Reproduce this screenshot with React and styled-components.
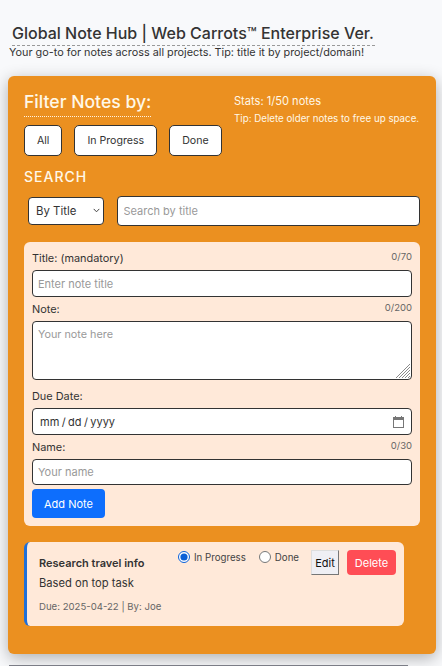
import React from "react";
import styled, { createGlobalStyle } from "styled-components";

const Global = createGlobalStyle`
  html, body {
    margin: 0;
    height: 666px;
    overflow: hidden;
    background: #f8f9fb;
    font-family: Inter, "Liberation Sans", sans-serif;
    color: #333;
  }
  * { box-sizing: border-box; }
`;

const Page = styled.div`
  padding: 24px 6px 0 8px;
`;

const Header = styled.header`
  height: 52px;
`;

const Title = styled.h1`
  display: inline-block;
  margin: 0 0 0 4px;
  padding: 0 1px 3px 0;
  font-size: 16px;
  line-height: 18px;
  font-weight: 500;
  color: #333;
  border-bottom: 1px dashed #999;
  vertical-align: top;
`;

const Subtitle = styled.p`
  margin: 0 0 0 1px;
  font-size: 10.85px;
  line-height: 13px;
  color: #333;
`;

const Panel = styled.main`
  width: 428px;
  height: 578px;
  padding: 16px;
  background: #eb9020;
  border-radius: 6px;
  box-shadow: 0 4px 16px rgba(0, 0, 0, 0.3);
`;

const FilterRow = styled.div`
  display: flex;
  justify-content: space-between;
`;

const FilterHeading = styled.h2`
  display: inline-block;
  margin: -1px 0 8px;
  padding-bottom: 3px;
  font-size: 17.6px;
  line-height: 22px;
  font-weight: 500;
  color: #fff8e8;
  border-bottom: 1px dotted #fff3e0;
`;

const Buttons = styled.div`
  display: flex;
  gap: 12px;
`;

const FilterButton = styled.button`
  height: 31px;
  padding: 0 12px;
  background: #fff;
  border: 1px solid #333;
  border-radius: 5px;
  font: 10.6px Inter, sans-serif;
  color: #333;
`;

const Stats = styled.div`
  width: 186px;
  color: #fff8e8;
`;

const StatLine = styled.div`
  font-size: ${(p) => p.$size}px;
  line-height: 18px;
  white-space: nowrap;
`;

const SearchHeading = styled.h3`
  margin: 12px 0 11px;
  font-size: 14px;
  line-height: 17px;
  font-weight: 500;
  letter-spacing: 1px;
  color: #fff8e8;
`;

const SearchRow = styled.div`
  display: flex;
  align-items: center;
  gap: 12.5px;
  padding-left: 4px;
`;

const SelectWrap = styled.div`
  position: relative;
  width: 76px;
  height: 28px;
`;

const SearchSelect = styled.select`
  display: block;
  width: 100%;
  height: 100%;
  padding: 0 7px;
  appearance: none;
  background: #fff;
  border: 1px solid #333;
  border-radius: 4px;
  font: 11.4px Inter, sans-serif;
  color: #333;
`;

const Chevron = styled.svg`
  position: absolute;
  top: 11px;
  right: 4px;
  width: 7px;
  height: 5px;
  pointer-events: none;
`;

const TextInput = styled.input`
  display: block;
  flex: 1;
  width: 100%;
  height: ${(p) => p.$height || 27}px;
  padding: 0 ${(p) => p.$pad || 5}px;
  background: #fff;
  border: 1px solid #333;
  border-radius: 4px;
  font: 11px Inter, sans-serif;
  color: #333;
  &::placeholder { color: #999; opacity: 1; }
`;

const NoteForm = styled.form`
  height: 284px;
  margin-top: 16px;
  padding: 8px;
  background: #ffe9d9;
  border-radius: 6px;
`;

const LabelRow = styled.div`
  display: flex;
  justify-content: space-between;
  height: ${(p) => p.$height}px;
  padding-top: ${(p) => p.$top}px;
`;

const Label = styled.label`
  font-size: 10.9px;
  line-height: 15px;
  color: #333;
`;

const Counter = styled.span`
  font-size: 9.5px;
  line-height: 12px;
  color: #666;
`;

const AreaWrap = styled.div`
  position: relative;
  height: 59px;
`;

const NoteArea = styled.textarea`
  display: block;
  width: 100%;
  height: 100%;
  padding: 6px 5px;
  resize: none;
  background: #fff;
  border: 1px solid #333;
  border-radius: 4px;
  font: 10.8px Inter, sans-serif;
  &::placeholder { color: #999; opacity: 1; }
`;

const Grip = styled.svg`
  position: absolute;
  right: 2px;
  bottom: 2px;
  width: 14px;
  height: 14px;
  pointer-events: none;
`;

const DateWrap = styled.div`
  position: relative;
  height: 27px;
`;

const DateInput = styled.input`
  display: block;
  width: 100%;
  height: 100%;
  padding: 0 6px;
  background: #fff;
  border: 1px solid #333;
  border-radius: 4px;
  font: 11px Inter, sans-serif;
  color: #333;
  &::-webkit-datetime-edit-text { padding: 0 1.4px; }
  &::-webkit-calendar-picker-indicator { opacity: 0; }
`;

const CalendarIcon = styled.svg`
  position: absolute;
  top: 8px;
  right: 8px;
  width: 11px;
  height: 12px;
  pointer-events: none;
`;

const AddButton = styled.button`
  display: block;
  height: 29px;
  margin-top: 4px;
  padding: 0 12px;
  background: #0d6efd;
  border: none;
  border-radius: 4px;
  font: 11px Inter, sans-serif;
  color: #fff;
`;

const NoteCard = styled.article`
  display: flex;
  justify-content: space-between;
  width: 380px;
  height: 84px;
  margin-top: 16px;
  padding: 8px 8px 0 12px;
  background: #ffe9d9;
  border-left: 3px solid #1e6fd9;
  border-radius: 6px;
`;

const NoteText = styled.div`
  padding-top: 6px;
`;

const NoteTitle = styled.div`
  font-size: 11px;
  line-height: 14px;
  font-weight: 600;
  color: #333;
`;

const NoteBody = styled.div`
  margin-top: 6px;
  font-size: 11.2px;
  line-height: 14px;
  color: #333;
`;

const NoteMeta = styled.div`
  margin-top: 11px;
  font-size: 9.6px;
  line-height: 12px;
  color: #666;
`;

const NoteActions = styled.div`
  display: flex;
  align-items: flex-start;
`;

const RadioLabel = styled.label`
  display: flex;
  align-items: center;
  gap: 4px;
  height: 12px;
  margin: 1px 13px 0 0;
  font-size: 9.7px;
  color: #444;
`;

const Radio = styled.input`
  width: 12px;
  height: 12px;
  margin: 0;
  accent-color: #0b5fd6;
`;

const EditButton = styled.button`
  width: 28px;
  height: 25px;
  margin: 0 8px 0 -1px;
  padding: 0;
  background: #efeff4;
  border: 1px solid #767676;
  border-color: #ddd #767676 #767676 #ddd;
  font: 11px Inter, sans-serif;
  color: #111;
`;

const DeleteButton = styled.button`
  width: 49px;
  height: 25px;
  padding: 0;
  background: #ff4d55;
  border: none;
  border-radius: 4px;
  font: 11px Inter, sans-serif;
  color: #fff;
`;

const NextStrip = styled.div`
  width: 399px;
  height: 1px;
  margin: 11px 0 0 1px;
  background: #7b7d86;
`;

export default function App() {
  return (
    <Page>
      <Global />
      <Header>
        <Title>Global Note Hub | Web Carrots™ Enterprise Ver.</Title>
        <Subtitle>Your go-to for notes across all projects. Tip: title it by project/domain!</Subtitle>
      </Header>
      <Panel>
        <FilterRow>
          <div>
            <FilterHeading>Filter Notes by:</FilterHeading>
            <Buttons>
              <FilterButton>All</FilterButton>
              <FilterButton>In Progress</FilterButton>
              <FilterButton>Done</FilterButton>
            </Buttons>
          </div>
          <Stats>
            <StatLine $size={11.1}>Stats: 1/50 notes</StatLine>
            <StatLine $size={9.75}>Tip: Delete older notes to free up space.</StatLine>
          </Stats>
        </FilterRow>
        <SearchHeading>SEARCH</SearchHeading>
        <SearchRow>
          <SelectWrap>
            <SearchSelect defaultValue="title">
              <option value="title">By Title</option>
            </SearchSelect>
            <Chevron viewBox="0 0 7 5">
              <path d="M0.7 0.9 L3.5 3.8 L6.3 0.9" fill="none" stroke="#444" strokeWidth="1" />
            </Chevron>
          </SelectWrap>
          <TextInput $height={30} $pad={6} placeholder="Search by title" />
        </SearchRow>
        <NoteForm>
          <LabelRow $height={20} $top={1}>
            <Label>Title: (mandatory)</Label>
            <Counter>0/70</Counter>
          </LabelRow>
          <TextInput placeholder="Enter note title" />
          <LabelRow $height={24} $top={5}>
            <Label>Note:</Label>
            <Counter>0/200</Counter>
          </LabelRow>
          <AreaWrap>
            <NoteArea placeholder="Your note here" />
            <Grip viewBox="0 0 14 14">
              <path d="M0 14 L14 0 M3 14 L14 3 M6 14 L14 6 M9 14 L14 9 M12 14 L14 12" fill="none" stroke="#8a8a8a" strokeWidth="1" />
            </Grip>
          </AreaWrap>
          <LabelRow $height={28} $top={9}>
            <Label>Due Date:</Label>
          </LabelRow>
          <DateWrap>
            <DateInput type="date" />
            <CalendarIcon viewBox="0 0 11 12">
              <path d="M2.5 0 V2 M8.5 0 V2" stroke="#777" strokeWidth="1" />
              <rect x="0.5" y="1.5" width="10" height="10" fill="none" stroke="#777" strokeWidth="1" />
              <rect x="0.5" y="1.5" width="10" height="2.5" fill="#777" />
            </CalendarIcon>
          </DateWrap>
          <LabelRow $height={24} $top={5}>
            <Label>Name:</Label>
            <Counter>0/30</Counter>
          </LabelRow>
          <TextInput $height={26} placeholder="Your name" />
          <AddButton type="button">Add Note</AddButton>
        </NoteForm>
        <NoteCard>
          <NoteText>
            <NoteTitle>Research travel info</NoteTitle>
            <NoteBody>Based on top task</NoteBody>
            <NoteMeta>Due: 2025-04-22 | By: Joe</NoteMeta>
          </NoteText>
          <NoteActions>
            <RadioLabel><Radio type="radio" name="status" defaultChecked />In Progress</RadioLabel>
            <RadioLabel><Radio type="radio" name="status" />Done</RadioLabel>
            <EditButton>Edit</EditButton>
            <DeleteButton>Delete</DeleteButton>
          </NoteActions>
        </NoteCard>
      </Panel>
      <NextStrip />
    </Page>
  );
}
